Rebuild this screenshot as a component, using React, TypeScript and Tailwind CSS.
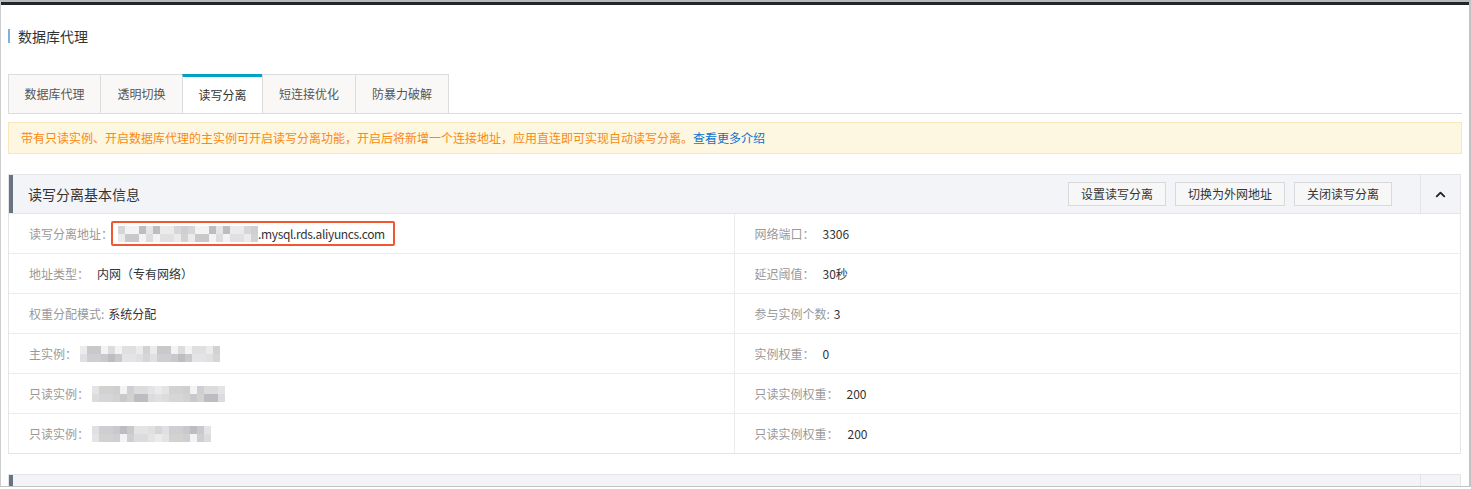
import { FiChevronUp } from "react-icons/fi";

const font = "font-['Microsoft_YaHei','Noto_Sans_CJK_SC','Noto_Sans',sans-serif]";

const tabs = [
  { name: "数据库代理", w: "w-[93px]" },
  { name: "透明切换", w: "w-[83px]" },
  { name: "读写分离", w: "w-[81px]", active: true },
  { name: "短连接优化", w: "w-[94px]" },
  { name: "防暴力破解", w: "w-[94px]" },
];

// pixelated, masked values
const shades = [
  "bg-[#f3f3f4]", "bg-[#e4e4e6]", "bg-[#d6d6d9]", "bg-[#c9c9cc]", "bg-[#dcdcdc]",
  "bg-[#ebebeb]", "bg-[#cfcfd3]", "bg-[#bdbdc1]", "bg-[#e0e0e2]", "bg-[#d2d2d0]",
];

const Blur = ({ cells, seed }: { cells: number; seed: number }) => {
  const row = (offset: number) => (
    <div className="flex">
      {Array.from({ length: cells }).map((_, i) => (
        <div key={i} className={`w-[7px] h-[8px] ${shades[(i * 7 + seed + offset * 3 + ((i * i) % 5)) % shades.length]}`} />
      ))}
    </div>
  );
  return (
    <div className="flex flex-col">
      {row(0)}
      {row(1)}
    </div>
  );
};

const Label = ({ children }: { children: React.ReactNode }) => (
  <span className="text-[#999]">{children}</span>
);

const Cell = ({ children, left }: { children: React.ReactNode; left?: boolean }) => (
  <div className={`h-[39px] flex items-center pl-[20px] text-[12px] text-[#333] ${left ? "border-r border-[#ececec]" : ""}`}>
    {children}
  </div>
);

export default function App() {
  return (
    <div className={`w-[1471px] h-[489px] bg-white overflow-hidden ${font}`}>
      <div className="h-[487px] border-t-2 border-t-[#b9b9b9] border-l border-l-[#cdcdcd] border-r-2 border-r-[#c3c3c3] border-b border-b-[#c3c3c3] overflow-hidden">
        <div className="h-[3px] bg-[#20262e]" />

        <div className="pl-[7px] pr-[7px]">
          <div className="mt-[24px] flex items-center h-[14px]">
            <div className="w-[2px] h-[14px] bg-[#7fb0d8]" />
            <span className="ml-[8px] text-[14px] leading-[14px] text-[#333]">数据库代理</span>
          </div>

          {/* tabs */}
          <div className="mt-[31px] flex border-b border-[#dcdcdc]">
            {tabs.map((t, i) => (
              <div
                key={t.name}
                className={`${t.w} h-[39px] flex items-center justify-center text-[12px] border border-b-0 ${i > 0 ? "-ml-px" : ""} ${
                  t.active
                    ? "bg-white text-[#333] border-[#dcdcdc] border-t-[3px] border-t-[#00a2ca]"
                    : "bg-[#f9f8f7] text-[#555] border-[#dcdcdc]"
                }`}
              >
                {t.name}
              </div>
            ))}
          </div>

          {/* notice */}
          <div className="mt-[8px] h-[32px] flex items-center pl-[12px] bg-[#fdf6e1] border border-[#f9e6bd] text-[12px] text-[#f98a14]">
            带有只读实例、开启数据库代理的主实例可开启读写分离功能，开启后将新增一个连接地址，应用直连即可实现自动读写分离。
            <span className="text-[#0b72d0]">查看更多介绍</span>
          </div>

          {/* panel */}
          <div className="mt-[20px] border border-[#e3e5ea] border-r-[#e6e6e6] mr-[1px]">
            <div className="h-[39px] flex items-stretch bg-[#f3f4f8] border-b border-[#e3e5ea]">
              <div className="w-[4px] bg-[#6b7380]" />
              <div className="flex-1 flex items-center pl-[15px] text-[14px] text-[#333]">读写分离基本信息</div>
              <div className="flex items-center gap-[9px] pr-[28px]">
                <button className="h-[24px] px-[12px] bg-[#f7f7f7] border border-[#d9d9d9] text-[12px] text-[#333]">设置读写分离</button>
                <button className="h-[24px] px-[12px] bg-[#f7f7f7] border border-[#d9d9d9] text-[12px] text-[#333]">切换为外网地址</button>
                <button className="h-[24px] px-[12px] bg-[#f7f7f7] border border-[#d9d9d9] text-[12px] text-[#333]">关闭读写分离</button>
              </div>
              <div className="w-[40px] border-l border-[#e3e5ea] flex items-center justify-center text-[#222]">
                <FiChevronUp className="w-[15px] h-[15px]" strokeWidth={3} />
              </div>
            </div>

            <div className="grid grid-cols-2">
              <Cell left>
                <Label>读写分离地址：</Label>
                <div className="-ml-[2px] h-[25px] flex items-center pl-[5px] pr-[8px] border-2 border-[#f0562f] rounded-[2px]">
                  <Blur cells={20} seed={2} />
                  <span className="text-[12px] tracking-[-0.35px]">.mysql.rds.aliyuncs.com</span>
                </div>
              </Cell>
              <Cell>
                <Label>网络端口：</Label>
                <span className="ml-[8px]">3306</span>
              </Cell>
            </div>
            <div className="grid grid-cols-2 border-t border-[#ececec]">
              <Cell left>
                <Label>地址类型：</Label>
                <span className="ml-[8px]">内网（专有网络）</span>
              </Cell>
              <Cell>
                <Label>延迟阈值：</Label>
                <span className="ml-[8px]">30秒</span>
              </Cell>
            </div>
            <div className="grid grid-cols-2 border-t border-[#ececec]">
              <Cell left>
                <Label>权重分配模式:</Label>
                <span className="ml-[4px]">系统分配</span>
              </Cell>
              <Cell>
                <Label>参与实例个数:</Label>
                <span className="ml-[4px]">3</span>
              </Cell>
            </div>
            <div className="grid grid-cols-2 border-t border-[#ececec]">
              <Cell left>
                <Label>主实例：</Label>
                <div className="ml-[3px]">
                  <Blur cells={20} seed={5} />
                </div>
              </Cell>
              <Cell>
                <Label>实例权重：</Label>
                <span className="ml-[8px]">0</span>
              </Cell>
            </div>
            <div className="grid grid-cols-2 border-t border-[#ececec]">
              <Cell left>
                <Label>只读实例：</Label>
                <div className="ml-[3px]">
                  <Blur cells={19} seed={1} />
                </div>
              </Cell>
              <Cell>
                <Label>只读实例权重：</Label>
                <span className="ml-[8px]">200</span>
              </Cell>
            </div>
            <div className="grid grid-cols-2 border-t border-[#ececec]">
              <Cell left>
                <Label>只读实例：</Label>
                <div className="ml-[3px]">
                  <Blur cells={17} seed={8} />
                </div>
              </Cell>
              <Cell>
                <Label>只读实例权重：</Label>
                <span className="ml-[9px]">200</span>
              </Cell>
            </div>
          </div>

          {/* next panel (cut off) */}
          <div className="mt-[20px] mr-[1px] h-[40px] border border-[#e3e5ea] flex items-stretch bg-[#f3f4f8]">
            <div className="w-[4px] bg-[#6b7380]" />
            <div className="flex-1" />
            <div className="w-[40px] border-l border-[#e3e5ea]" />
          </div>
        </div>
      </div>
    </div>
  );
}
